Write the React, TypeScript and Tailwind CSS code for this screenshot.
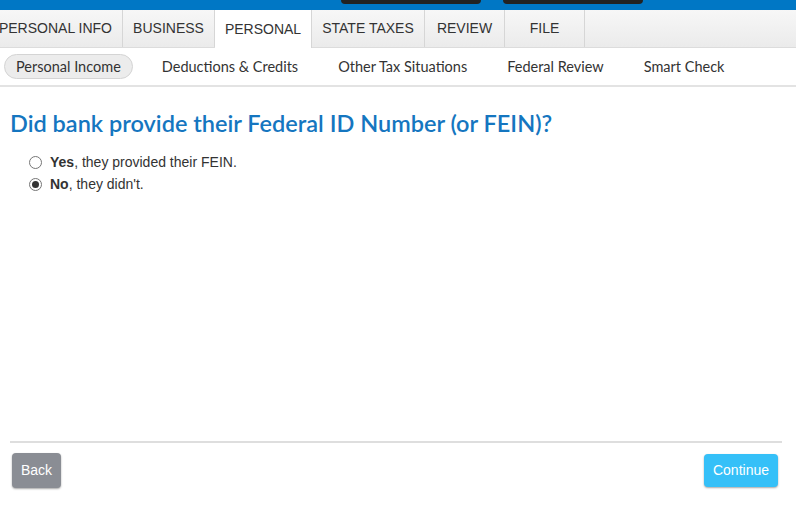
const tabs = [
  { label: "PERSONAL INFO", w: "w-[123px] justify-end pr-[10px]" },
  { label: "BUSINESS", w: "w-[92px] justify-center" },
  { label: "PERSONAL", w: "w-[97px] justify-center", active: true },
  { label: "STATE TAXES", w: "w-[113px] justify-center" },
  { label: "REVIEW", w: "w-[80px] justify-center" },
  { label: "FILE", w: "w-[80px] justify-center" },
];

const subNav = [
  { label: "Personal Income", active: true },
  { label: "Deductions & Credits" },
  { label: "Other Tax Situations" },
  { label: "Federal Review" },
  { label: "Smart Check" },
];

const Radio = ({ checked }: { checked?: boolean }) => (
  <span className="flex h-[13px] w-[13px] items-center justify-center rounded-full border border-[#767676] bg-white">
    {checked && <span className="h-[7px] w-[7px] rounded-full bg-[#333]" />}
  </span>
);

export default function App() {
  return (
    <div className="flex h-[508px] w-[796px] flex-col overflow-hidden bg-white font-['Liberation_Sans',Arial,sans-serif]">
      {/* top blue bar */}
      <div className="flex h-[10px] bg-[#0077c5]">
        <div className="ml-[341px] h-[4px] w-[140px] rounded-b-[4px] bg-[#222]" />
        <div className="ml-[22px] h-[4px] w-[140px] rounded-b-[4px] bg-[#222]" />
      </div>

      {/* main tabs */}
      <div className="flex h-[38px] border-b border-[#dcdcdc] bg-gradient-to-b from-[#f7f7f7] to-[#ebebeb]">
        {tabs.map((t) => (
          <div
            key={t.label}
            className={`${t.w} flex items-center whitespace-nowrap border-r border-[#d6d6d6] text-[14px] text-[#333] ${
              t.active ? "-mb-px bg-white pt-[1px]" : "pb-[1px]"
            }`}
          >
            {t.label}
          </div>
        ))}
      </div>

      {/* sub nav */}
      <div className="flex h-[39px] items-center border-b-2 border-[#e3e3e3] pl-[4px] font-['Lato','Open_Sans',sans-serif] text-[14.5px] text-[#333]">
        {subNav.map((s, i) => (
          <div
            key={s.label}
            className={
              s.active
                ? "mr-[29px] rounded-full border border-[#d4d4d4] bg-[#ececec] px-[11px] py-[1px]"
                : i === 4
                ? ""
                : "mr-[40px]"
            }
          >
            {s.label}
          </div>
        ))}
      </div>

      {/* question */}
      <div className="flex-1 px-[10px] pt-[22px]">
        <h1 className="font-['Lato','Open_Sans',sans-serif] text-[23.5px] font-semibold leading-[28px] text-[#1576c0]">
          Did bank provide their Federal ID Number (or FEIN)?
        </h1>
        <div className="mt-[15px] flex flex-col gap-[2px] pl-[19px] text-[14px] text-[#333]">
          <label className="flex h-[20px] items-center gap-[8px]">
            <Radio />
            <span>
              <b>Yes</b>, they provided their FEIN.
            </span>
          </label>
          <label className="flex h-[20px] items-center gap-[8px]">
            <Radio checked />
            <span>
              <b>No</b>, they didn't.
            </span>
          </label>
        </div>
      </div>

      {/* footer */}
      <div className="mb-[20px] ml-[10px] mr-[14px] border-t-2 border-[#dedede] pt-[10px]">
        <div className="flex items-center justify-between pl-[2px] pr-[4px]">
          <button className="h-[35px] rounded-[4px] bg-[#8a8d94] px-[9px] text-[14px] text-white shadow-[0_1px_2px_rgba(0,0,0,0.35)]">
            Back
          </button>
          <button className="h-[33px] rounded-[4px] bg-[#35c0f8] px-[9px] text-[14px] text-white shadow-[0_1px_2px_rgba(0,0,0,0.35)]">
            Continue
          </button>
        </div>
      </div>
    </div>
  );
}
